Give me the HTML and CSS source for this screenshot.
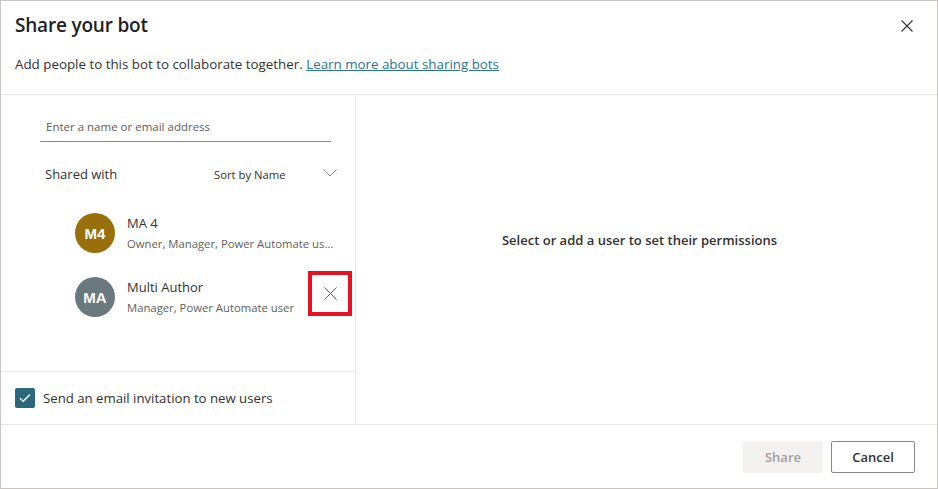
FILE: index.html
```html
<!DOCTYPE html>
<html lang="en">
<head>
<meta charset="utf-8">
<title>Share your bot</title>
<link rel="stylesheet" href="styles.css">
</head>
<body>
<div class="dialog">
  <header class="header">
    <div class="title-row">
      <h1 class="title">Share your bot</h1>
      <button class="close" aria-label="Close">
        <svg width="12" height="12" viewBox="0 0 12 12"><path d="M0.5 0.5 L11.5 11.5 M11.5 0.5 L0.5 11.5" stroke="#323130" stroke-width="1.1" fill="none"/></svg>
      </button>
    </div>
    <p class="subtitle">Add people to this bot to collaborate together. <a href="#" class="link">Learn more about sharing bots</a></p>
  </header>
  <main class="main">
    <section class="left">
      <div class="left-body">
        <div class="search">Enter a name or email address</div>
        <div class="shared-row">
          <span class="shared-label">Shared with</span>
          <span class="sort">Sort by Name</span>
          <svg class="chevron" width="14" height="8" viewBox="0 0 14 8"><path d="M0.5 0.5 L7 7 L13.5 0.5" stroke="#8a8886" stroke-width="1" fill="none"/></svg>
        </div>
        <ul class="people">
          <li class="person">
            <span class="avatar gold">M4</span>
            <div class="info">
              <div class="name">MA 4</div>
              <div class="role">Owner, Manager, Power Automate user</div>
            </div>
          </li>
          <li class="person">
            <span class="avatar gray">MA</span>
            <div class="info">
              <div class="name">Multi Author</div>
              <div class="role">Manager, Power Automate user</div>
            </div>
            <button class="remove" aria-label="Remove">
              <svg width="13" height="13" viewBox="0 0 13 13"><path d="M0.5 0.5 L12.5 12.5 M12.5 0.5 L0.5 12.5" stroke="#605e5c" stroke-width="1" fill="none"/></svg>
            </button>
          </li>
        </ul>
      </div>
      <label class="invite">
        <span class="checkbox">
          <svg width="12" height="10" viewBox="0 0 12 10"><path d="M1 5.2 L4.2 8.3 L11 1.5" stroke="#fff" stroke-width="1.3" fill="none"/></svg>
        </span>
        <span>Send an email invitation to new users</span>
      </label>
    </section>
    <section class="right">
      <p class="hint">Select or add a user to set their permissions</p>
    </section>
  </main>
  <footer class="footer">
    <button class="btn btn-disabled">Share</button>
    <button class="btn btn-default">Cancel</button>
  </footer>
</div>
</body>
</html>
```

FILE: styles.css
```css
* { box-sizing: border-box; }
html, body { margin: 0; padding: 0; background: #fff; }
body {
  font-family: "Open Sans", "Noto Sans", Arial, sans-serif;
  color: #323130;
}
.dialog {
  width: 938px;
  height: 489px;
  border: 1px solid #c8c6c4;
  display: flex;
  flex-direction: column;
}
.header {
  padding: 9px 22px 0 14px;
  height: 94px;
  flex: none;
  border-bottom: 1px solid #e6e6e6;
}
.title-row {
  display: flex;
  justify-content: space-between;
  align-items: center;
  height: 30px;
}
.title {
  margin: 0;
  font-size: 19px;
  font-weight: 600;
  color: #201f1e;
  letter-spacing: -0.2px;
}
.close {
  border: 0;
  background: none;
  padding: 0;
  width: 12px;
  height: 12px;
  display: flex;
  margin-top: 2px;
  margin-right: 2px;
}
.subtitle {
  margin: 14px 0 0;
  font-size: 13.35px;
  line-height: 20px;
  color: #323130;
}
.link {
  color: #2a7396;
  text-decoration: underline;
}
.main {
  display: flex;
  height: 330px;
  flex: none;
  border-bottom: 1px solid #e6e6e6;
}
.left {
  width: 355px;
  border-right: 1px solid #e6e6e6;
  display: flex;
  flex-direction: column;
}
.left-body {
  flex: 1;
  padding: 22px 18px 0 39px;
}
.search {
  width: 291px;
  height: 25px;
  border-bottom: 1px solid #8a8886;
  padding-left: 6px;
  font-size: 11.5px;
  line-height: 20px;
  color: #605e5c;
}
.shared-row {
  display: flex;
  align-items: center;
  height: 22px;
  margin-top: 21px;
  padding-left: 5px;
}
.shared-label {
  font-size: 13px;
  width: 169px;
  color: #323130;
}
.sort {
  font-size: 11.3px;
  color: #323130;
  width: 109px;
}
.chevron { margin-top: -2px; }
.people {
  list-style: none;
  margin: 16px 0 0;
  padding: 0 0 0 35px;
}
.person {
  display: flex;
  align-items: center;
  height: 64px;
  position: relative;
}
.avatar {
  width: 40px;
  height: 40px;
  border-radius: 50%;
  display: flex;
  align-items: center;
  justify-content: center;
  color: #fff;
  font-family: "Liberation Sans", Arial, sans-serif;
  font-weight: 700;
  font-size: 15px;
  flex: none;
}
.gold { background: #986f0b; }
.gray { background: #69797e; }
.info {
  margin-left: 12px;
  min-width: 0;
  width: 207px;
}
.name {
  font-size: 13px;
  line-height: 18px;
  color: #323130;
}
.role {
  margin-top: 4px;
  font-size: 11.3px;
  line-height: 16px;
  color: #605e5c;
  white-space: nowrap;
  overflow: hidden;
  text-overflow: ellipsis;
}
.remove {
  position: absolute;
  left: 233px;
  top: 6px;
  width: 44px;
  height: 45px;
  border: 4px solid #e81123;
  background: #fff;
  display: flex;
  align-items: center;
  justify-content: center;
  padding: 0;
}
.invite {
  height: 53px;
  border-top: 1px solid #e6e6e6;
  display: flex;
  align-items: center;
  padding-left: 14px;
  font-size: 13.2px;
  color: #323130;
  gap: 8px;
}
.checkbox {
  width: 20px;
  height: 20px;
  border-radius: 2px;
  background: #2c687c;
  display: flex;
  align-items: center;
  justify-content: center;
}
.right {
  flex: 1;
  display: flex;
  justify-content: center;
  padding-top: 136px;
  padding-right: 14px;
}
.hint {
  margin: 0;
  font-size: 13px;
  font-weight: 600;
  color: #323130;
}
.footer {
  flex: 1;
  display: flex;
  justify-content: flex-end;
  align-items: flex-start;
  gap: 8px;
  padding: 16px 22px 0 0;
}
.btn {
  height: 32px;
  border-radius: 2px;
  font-family: "Open Sans", "Noto Sans", Arial, sans-serif;
  font-size: 13px;
  font-weight: 600;
  padding: 0;
}
.btn-disabled {
  width: 80px;
  background: #f3f2f1;
  border: 1px solid #f3f2f1;
  color: #a19f9d;
}
.btn-default {
  width: 84px;
  background: #fff;
  border: 1px solid #8a8886;
  color: #323130;
}
```
